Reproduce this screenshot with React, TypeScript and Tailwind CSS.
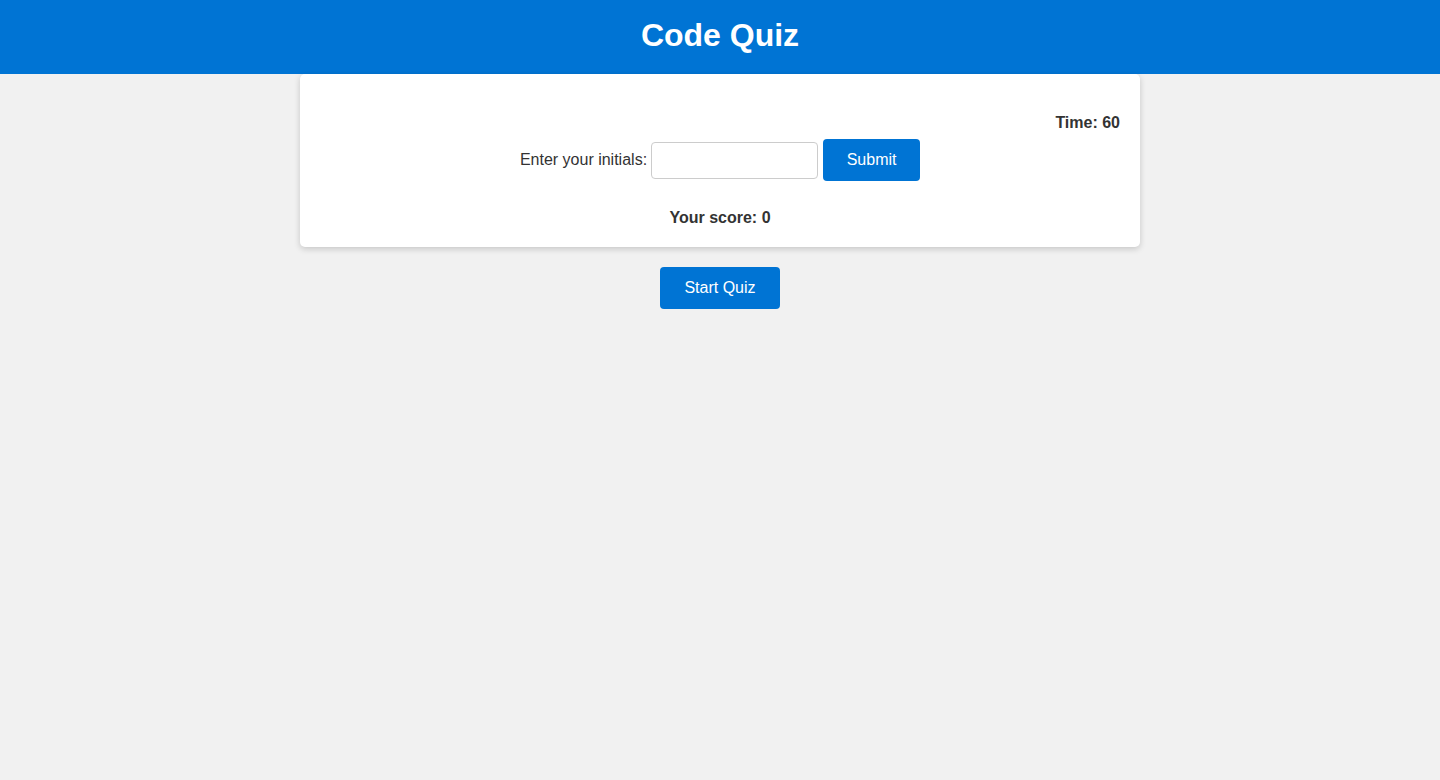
export default function App() {
  return (
    <div className="min-h-[780px] bg-[#f1f1f1] text-[#333] font-['Liberation_Sans',Arial,sans-serif]">
      <header className="h-[74px] bg-[#0074d4] flex items-center justify-center pb-[4px]">
        <h1 className="text-white text-[32px] font-bold leading-none">Code Quiz</h1>
      </header>
      <main className="flex flex-col items-center">
        <div className="w-[840px] bg-white rounded-[5px] shadow-[0_2px_6px_rgba(0,0,0,0.18)] pt-[40px] pb-[20px] px-[20px]">
          <div className="text-right font-bold text-[16px] leading-[18px]">Time: 60</div>
          <div className="mt-[7px] flex items-center justify-center text-[16px] leading-[18px]">
            <label>Enter your initials:</label>
            <input
              type="text"
              className="ml-[4px] w-[167px] h-[37px] border border-[#ccc] rounded-[4px] bg-white px-2 outline-none"
            />
            <button className="ml-[5px] w-[97px] h-[42px] bg-[#0074d4] text-white rounded-[4px] text-[16px]">
              Submit
            </button>
          </div>
          <div className="mt-[28px] text-center font-bold text-[16px] leading-[18px]">Your score: 0</div>
        </div>
        <button className="mt-[20px] w-[120px] h-[42px] bg-[#0074d4] text-white rounded-[4px] text-[16px]">
          Start Quiz
        </button>
      </main>
    </div>
  );
}
